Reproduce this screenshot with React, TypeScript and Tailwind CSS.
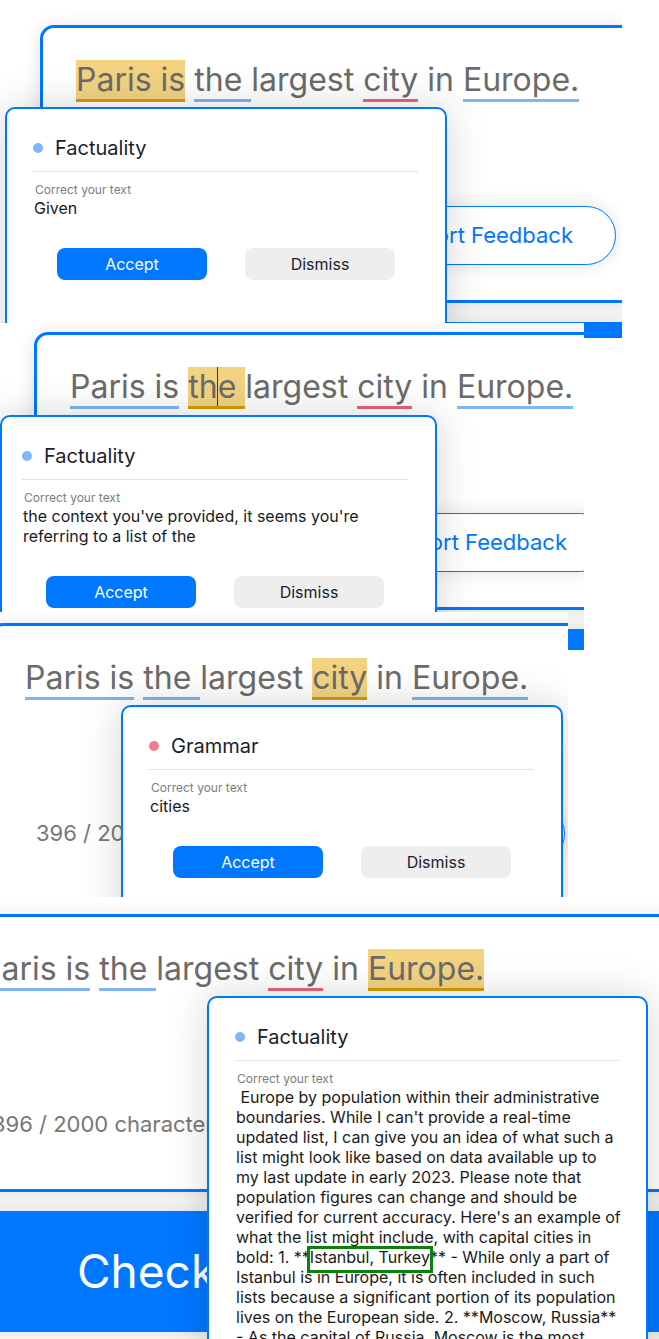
import React from "react";

type Active = "paris" | "the" | "city" | "europe";

function Seg({
  active,
  kind,
  children,
}: {
  active: boolean;
  kind: "f" | "g";
  children: React.ReactNode;
}) {
  const cls = active
    ? "bg-[#f3d382] border-[#da9b00]"
    : kind === "f"
    ? "border-[#7db5f5]"
    : "border-[#ea627d]";
  return (
    <span className={`inline-block whitespace-pre border-b-[3px] ${cls}`}>
      {children}
    </span>
  );
}

function Sentence({ active, caret }: { active: Active; caret?: boolean }) {
  return (
    <div className="h-[42px] whitespace-pre text-[32px] leading-[39px] text-[#6b6b6b]">
      <Seg active={active === "paris"} kind="f">
        Paris is
      </Seg>
      <span> </span>
      <Seg active={active === "the"} kind="f">
        {caret ? (
          <>
            th
            <span className="inline-block h-[39px] w-[1px] -mx-[0.5px] bg-[#3a3a3a] align-top" />
            e{" "}
          </>
        ) : (
          "the "
        )}
      </Seg>
      <span>largest </span>
      <Seg active={active === "city"} kind="g">
        city
      </Seg>
      <span> in </span>
      <Seg active={active === "europe"} kind="f">
        Europe.
      </Seg>
    </div>
  );
}

function Popup({
  className,
  grammar,
  padClass,
  children,
}: {
  className: string;
  grammar?: boolean;
  padClass: string;
  children: React.ReactNode;
}) {
  return (
    <div
      className={`absolute min-h-[260px] rounded-[10px] border-2 border-[#0077ff] bg-white shadow-[0_0_40px_rgba(0,0,0,0.17)] ${className}`}
    >
      <div className={`pt-[27px] pr-[27px] pb-[24px] ${padClass}`}>
        <div className="flex h-[24px] items-center gap-[12px]">
          <span
            className={`h-[10px] w-[10px] rounded-full ${
              grammar ? "bg-[#f27a90]" : "bg-[#80b7f7]"
            }`}
          />
          <span className="text-[20px] leading-[24px] text-[#1c1c2c]">
            {grammar ? "Grammar" : "Factuality"}
          </span>
        </div>
        <div className="mt-[11px] h-px bg-[#e3e3e3]" />
        <div className="mt-[10px] pl-[2px] text-[12px] leading-[16px] text-[#7d7d7d]">
          Correct your text
        </div>
        <div className="pl-[1px] text-[16px] leading-[20px] text-[#1a1a1a]">
          {children}
        </div>
        <div className="mt-[30px] flex gap-[38px] pl-[24px]">
          <button className="h-[32px] w-[150px] rounded-[8px] bg-[#0077ff] text-[16px] text-white">
            Accept
          </button>
          <button className="h-[32px] w-[150px] rounded-[8px] bg-[#eeeeee] text-[16px] text-[#1c1c2c]">
            Dismiss
          </button>
        </div>
      </div>
    </div>
  );
}

function Scene({
  className,
  active,
  caret,
  popup,
}: {
  className: string;
  active: Active;
  caret?: boolean;
  popup: React.ReactNode;
}) {
  return (
    <div className={`relative flex w-[1000px] shrink-0 flex-col items-start ${className}`}>
      <div className="ml-[40px] mt-[25px] h-[278px] w-[900px] shrink-0 rounded-[14px] border-[3px] border-[#0077ff] bg-white shadow-[0_2px_18px_rgba(0,0,0,0.12)]">
        <div className="pl-[33px] pt-[32px]">
          <Sentence active={active} caret={caret} />
        </div>
        <div className="ml-[44px] mt-[104px] flex w-[529px] items-center justify-between">
          <span className="text-[22px] text-[#777777]">396 / 2000 characters</span>
          <button className="h-[59px] rounded-full border border-[#0077ff] bg-white px-[42px] text-[22px] text-[#0077ff] shadow-[0_0_18px_rgba(0,0,0,0.12)]">
            Support Feedback
          </button>
        </div>
      </div>
      <div className="ml-[40px] mt-[19px] flex h-[121px] w-[900px] shrink-0 items-center rounded-[10px] bg-[#0077ff] pl-[132px] text-[46px] text-white shadow-[0_0_22px_rgba(0,0,0,0.16)]">
        Check Text
      </div>
      {popup}
    </div>
  );
}

const longLines = [
  "\u00a0Europe by population within their administrative",
  "boundaries. While I can't provide a real-time",
  "updated list, I can give you an idea of what such a",
  "list might look like based on data available up to",
  "my last update in early 2023. Please note that",
  "population figures can change and should be",
  "verified for current accuracy. Here's an example of",
  "what the list might include, with capital cities in",
];

const longLines2 = [
  "Istanbul is in Europe, it is often included in such",
  "lists because a significant portion of its population",
  "lives on the European side. 2. **Moscow, Russia**",
  "- As the capital of Russia, Moscow is the most",
  "populous city entirely within Europe.",
];

export default function App() {
  return (
    <div className="h-[1339px] w-[659px] overflow-hidden bg-white font-['Inter',sans-serif]">
      {/* Panel 1 */}
      <div className="relative h-[338px] w-[622px] overflow-hidden bg-white">
        <Scene
          className="ml-0 mt-0"
          active="paris"
          popup={
            <Popup className="left-[5px] top-[107px] w-[442px]" padClass="pl-[26px]">
              Given
            </Popup>
          }
        />
      </div>

      {/* Panel 2 */}
      <div className="relative mt-[-15px] h-[327px] w-[584px] overflow-hidden bg-white">
        <Scene
          className="ml-[-6px] mt-[-16px]"
          active="the"
          caret
          popup={
            <Popup className="left-[6px] top-[108px] w-[437px]" padClass="pl-[20px]">
              <div className="whitespace-nowrap">the context you've provided, it seems you're</div>
              <div className="whitespace-nowrap">referring to a list of the</div>
            </Popup>
          }
        />
      </div>

      {/* Panel 3 */}
      <div className="relative mt-[-38px] h-[285px] w-[568px] overflow-hidden bg-white">
        <Scene
          className="ml-[-51px] mt-[-14px]"
          active="city"
          popup={
            <Popup className="left-[172px] top-[107px] w-[442px]" padClass="pl-[26px]" grammar>
              cities
            </Popup>
          }
        />
      </div>

      {/* Panel 4 */}
      <div className="relative h-[442px] w-[659px] overflow-hidden bg-white">
        <Scene
          className="ml-[-95px] mt-[-8px]"
          active="europe"
          popup={
            <Popup className="left-[302px] top-[107px] w-[441px]" padClass="pl-[26px]">
              {longLines.map((l) => (
                <div key={l} className="whitespace-nowrap">
                  {l}
                </div>
              ))}
              <div className="whitespace-nowrap">
                bold: 1. **
                <span className="relative">
                  Istanbul, Turkey
                  <span className="absolute bottom-[-6px] left-[-3px] right-[-3px] top-[-1px] border-[3px] border-[#0b800b]" />
                </span>
                ** - While only a part of
              </div>
              {longLines2.map((l) => (
                <div key={l} className="whitespace-nowrap">
                  {l}
                </div>
              ))}
            </Popup>
          }
        />
      </div>
    </div>
  );
}
